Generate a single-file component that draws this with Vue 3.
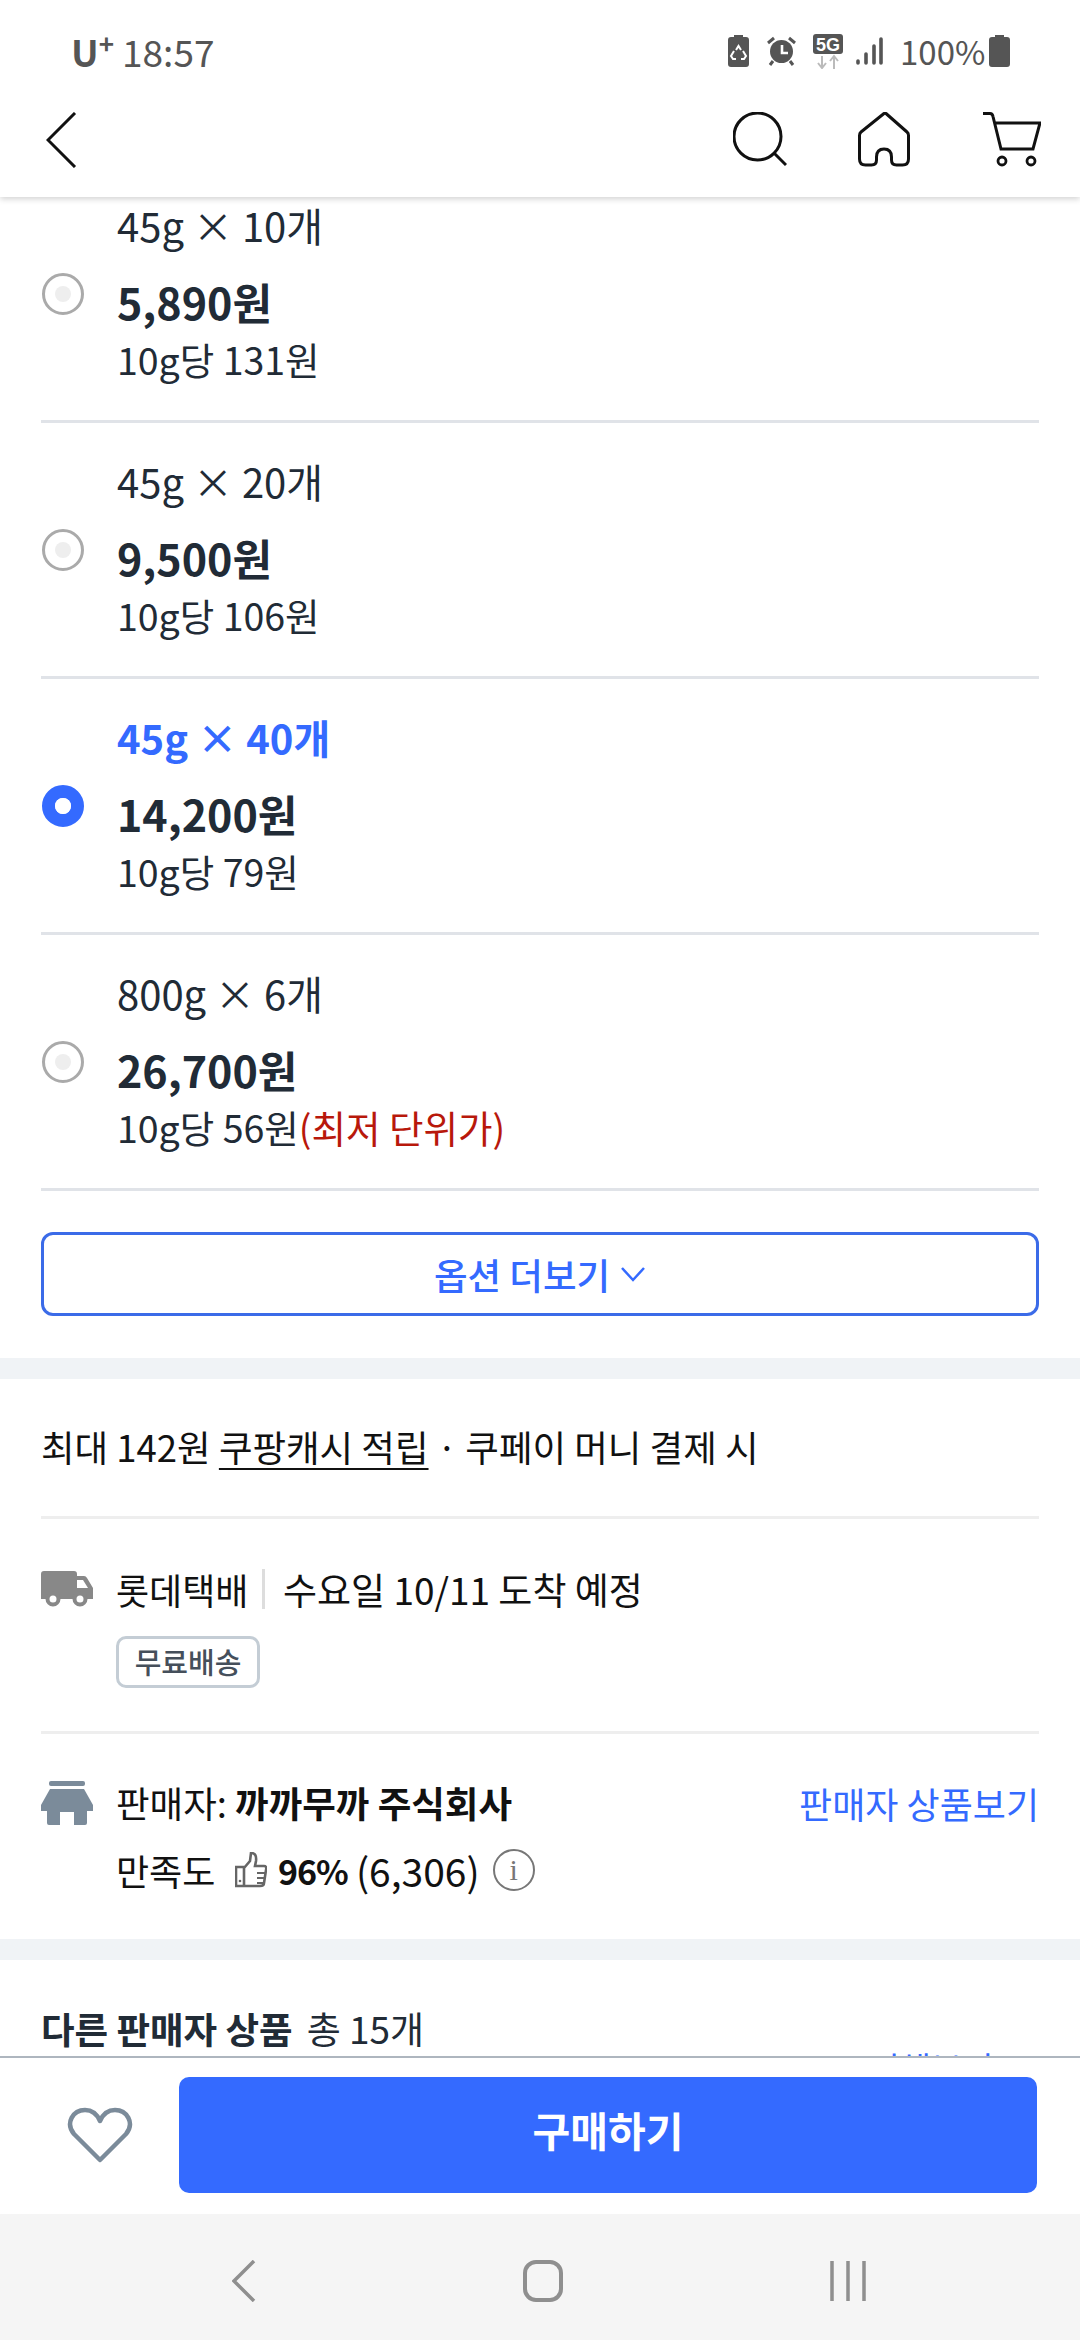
<script setup>
const options = [
  { title: '45g × 10개', price: '5,890원', unit: '10g당 131원' },
  { title: '45g × 20개', price: '9,500원', unit: '10g당 106원' },
  { title: '45g × 40개', price: '14,200원', unit: '10g당 79원', selected: true },
  { title: '800g × 6개', price: '26,700원', unit: '10g당 56원', note: '(최저 단위가)' }
]
</script>

<template>
  <div class="phone">
    <div class="top">
      <div class="status">
        <div class="status-left">
          <span class="carrier">U<sup>+</sup></span>
          <span class="clock">18:57</span>
        </div>
        <div class="status-right">
          <svg width="21" height="32" viewBox="0 0 21 32">
            <path d="M6 0h9v2h3a3 3 0 0 1 3 3v24a3 3 0 0 1-3 3H3a3 3 0 0 1-3-3V5a3 3 0 0 1 3-3h3z" fill="#555" />
            <path d="M8 15l2.5-4 2.5 4M15 16l3 5-2 3h-3M6 16l-3 5 2 3h3" stroke="#fff" stroke-width="2" fill="none" />
          </svg>
          <svg class="st-alarm" width="29" height="30" viewBox="0 0 29 30">
            <circle cx="14.5" cy="15.5" r="11.5" fill="#555" />
            <path d="M15 9v8h6" stroke="#fff" stroke-width="2.6" fill="none" />
            <path d="M1 7l6-5M28 7l-6-5M6 25l-3 4M23 25l3 4" stroke="#555" stroke-width="3" />
          </svg>
          <svg class="st-5g" width="30" height="35" viewBox="0 0 30 35">
            <rect width="30" height="20" rx="3" fill="#555" />
            <text x="15" y="16.5" text-anchor="middle" class="five-g">5G</text>
            <path d="M9 22v12M5 29l4 5 4-5M21 35V22M17 27l4-5 4 5" stroke="#bbb" stroke-width="2" fill="none" />
          </svg>
          <svg class="st-signal" width="27" height="28" viewBox="0 0 27 28">
            <path d="M2 24v2M10 17v9M18 9v17M25 2v24" stroke="#555" stroke-width="3.6" stroke-linecap="round" />
          </svg>
          <span class="pct">100%</span>
          <svg class="st-full" width="21" height="32" viewBox="0 0 21 32">
            <path d="M6 0h9v2h3a3 3 0 0 1 3 3v24a3 3 0 0 1-3 3H3a3 3 0 0 1-3-3V5a3 3 0 0 1 3-3h3z" fill="#555" />
          </svg>
        </div>
      </div>
      <div class="bar">
        <svg width="32" height="56" viewBox="0 0 32 56">
          <path d="M29 1L2 28l27 27" stroke="#111" stroke-width="3" fill="none" />
        </svg>
        <div class="bar-icons">
          <svg width="54" height="56" viewBox="0 0 54 56">
            <circle cx="24.5" cy="24.5" r="23.5" stroke="#111" stroke-width="3" fill="none" />
            <path d="M41 41l12 12" stroke="#111" stroke-width="3" />
          </svg>
          <svg width="54" height="56" viewBox="0 0 54 56">
            <path d="M26 1.5L3 20q-1.500 1.200-1.500 3.500V47q0 6 6 6h6q5 0 5-5v-3q0-8 7.500-8t7.500 8v3q0 5 5 5h6q6 0 6-6V23.500q0-2.300-1.500-3.500L28 1.500q-1-.8-2 0z" stroke="#111" stroke-width="3" fill="none" stroke-linejoin="round" />
          </svg>
          <svg width="58" height="56" viewBox="0 0 58 56">
            <path d="M0 1.500h7q2.500 0 3 3L18 37h32l7-26H12" stroke="#111" stroke-width="3" fill="none" />
            <circle cx="19" cy="49" r="4" stroke="#111" stroke-width="2.8" fill="none" />
            <circle cx="48" cy="49" r="4" stroke="#111" stroke-width="2.8" fill="none" />
          </svg>
        </div>
      </div>
    </div>

    <div class="scroll">
      <div class="options">
        <div v-for="opt in options" :key="opt.title" class="option">
          <span class="radio" :class="{ on: opt.selected }"></span>
          <div class="texts">
            <div class="opt-title" :class="{ on: opt.selected }">{{ opt.title }}</div>
            <div class="opt-price">{{ opt.price }}</div>
            <div class="opt-unit">{{ opt.unit }}<span v-if="opt.note" class="note">{{ opt.note }}</span></div>
          </div>
        </div>
      </div>

      <div class="more">
        <span>옵션 더보기</span>
        <svg width="26" height="16" viewBox="0 0 26 16">
          <path d="M2 2l11 12L24 2" stroke="#346aff" stroke-width="2.5" fill="none" />
        </svg>
      </div>

      <div class="band"></div>

      <div class="cash"><span>최대 142원 <u>쿠팡캐시 적립</u> · 쿠페이 머니 결제 시</span></div>

      <div class="delivery">
        <div class="del-line">
          <svg class="truck" width="52" height="36" viewBox="0 0 52 36">
            <path d="M3 0h30a3 3 0 0 1 3 3v25H0V3a3 3 0 0 1 3-3zM36 5h7q2 0 3 2l6 10v11H36z" fill="#888" />
            <path d="M36 9h6l5 8H36z" fill="#fff" />
            <circle cx="12" cy="28" r="5.500" fill="#fff" stroke="#888" stroke-width="4" />
            <circle cx="39" cy="28" r="5.500" fill="#fff" stroke="#888" stroke-width="4" />
          </svg>
          <span class="carrier-name">롯데택배</span>
          <span class="del-sep"></span>
          <span class="del-date">수요일 10/11 도착 예정</span>
        </div>
        <span class="free">무료배송</span>
      </div>

      <div class="seller">
        <div class="seller-line">
          <svg class="shop" width="52" height="44" viewBox="0 0 52 44">
            <rect x="8" y="0" width="36" height="5" rx="2" fill="#7b8b9a" />
            <path d="M9 8h34l9 16v6h-6v12q0 2-2 2H33V31H19v13H8q-2 0-2-2V30H0v-6z" fill="#7b8b9a" />
          </svg>
          <span class="seller-name">판매자: <b>까까무까 주식회사</b></span>
          <span class="seller-link">판매자 상품보기</span>
        </div>
        <div class="rating">
          <span class="rate-label">만족도</span>
          <svg class="thumb" width="32" height="36" viewBox="0 0 32 36">
            <path d="M1 15h8v19H1zM9 16l6-7 1-8q6 0 5 8l-1 5h9q3 0 2 4l-2 13q0 3-4 3H9" stroke="#666" stroke-width="2.6" fill="none" />
            <path d="M22 21h8M22 26h7M22 31h6" stroke="#666" stroke-width="2.2" />
            <circle cx="5" cy="29" r="1.300" fill="#666" />
          </svg>
          <b class="rate-num">96%</b>
          <span class="rate-count">(6,306)</span>
          <span class="info">i</span>
        </div>
      </div>

      <div class="band"></div>

      <div class="others">
        <b>다른 판매자 상품</b><span class="others-count">총 15개</span>
      </div>
      <div class="others-link">전체보기 &gt;</div>
    </div>

    <div class="footer">
      <svg width="66" height="56" viewBox="0 0 66 56">
        <path d="M33 53L7 27C-2 16 6 3 18 3c7 0 12 4 15 11C36 7 41 3 48 3c12 0 20 13 11 24z" stroke="#7b8b9a" stroke-width="4.500" fill="none" stroke-linejoin="round" />
      </svg>
      <button class="buy">구매하기</button>
    </div>

    <div class="nav">
      <svg width="24" height="42" viewBox="0 0 24 42">
        <path d="M22 1L2 21l20 20" stroke="#8f8f8f" stroke-width="3.500" fill="none" />
      </svg>
      <svg width="40" height="42" viewBox="0 0 40 42">
        <rect x="2" y="2" width="36" height="38" rx="11" stroke="#8f8f8f" stroke-width="4" fill="none" />
      </svg>
      <svg width="36" height="42" viewBox="0 0 36 42">
        <path d="M2 1v40M18 1v40M34 1v40" stroke="#8f8f8f" stroke-width="3.500" />
      </svg>
    </div>
  </div>
</template>

<style>
html, body {
  margin: 0;
  background: #fff;
}
</style>

<style scoped>
.phone {
  width: 1080px;
  height: 2340px;
  display: flex;
  flex-direction: column;
  overflow: hidden;
  background: #fff;
  color: #111;
  font-family: "Noto Sans CJK KR", "Noto Sans", sans-serif;
}

.top {
  height: 197px;
  flex: none;
  position: relative;
  z-index: 2;
  background: #fff;
  box-shadow: 0 2px 6px rgba(0, 0, 0, .18);
  box-sizing: border-box;
  padding: 0 39px 0 46px;
}

.status {
  height: 112px;
  margin-right: -10px;
  display: flex;
  justify-content: space-between;
  align-items: flex-start;
  padding: 33px 41px 0 25px;
  box-sizing: border-box;
  color: #555;
}

.status-left {
  display: flex;
  align-items: center;
  gap: 8px;
  height: 36px;
  font-size: 37px;
}

.carrier {
  font-weight: 700;
}

.carrier sup {
  font-size: 26px;
  line-height: 0;
}

.status-right {
  display: flex;
  align-items: center;
  height: 36px;
}

.st-alarm {
  margin-left: 18px;
}

.st-5g {
  margin-left: 17px;
}

.st-signal {
  margin-left: 13px;
}

.pct {
  margin-left: 17px;
  font-size: 33px;
  width: 89px;
}

.five-g {
  font-family: "Liberation Sans", sans-serif;
  font-size: 18px;
  font-weight: 700;
  fill: #fff;
}

.bar {
  display: flex;
  justify-content: space-between;
  align-items: center;
  height: 56px;
}

.bar-icons {
  display: flex;
  gap: 71px;
}

.scroll {
  flex: 1;
  min-height: 0;
  overflow: hidden;
}

/* list is scrolled a little under the header */
.options {
  margin: -30px 41px 0;
}

.option {
  height: 256px;
  box-sizing: border-box;
  border-bottom: 3px solid #e0e3e8;
  display: flex;
  align-items: center;
  gap: 33px;
}

.texts {
  padding-bottom: 6px;
}

.radio {
  width: 42px;
  height: 42px;
  margin-left: 1px;
  box-sizing: border-box;
  border-radius: 50%;
  border: 3px solid #aaa;
  background: #fff;
  display: grid;
  place-items: center;
  flex: none;
}

.radio::after {
  content: "";
  width: 16px;
  height: 16px;
  border-radius: 50%;
  background: #eee;
}

.radio.on {
  border: 13px solid #346aff;
}

.radio.on::after {
  background: #fff;
}

.opt-title {
  font-size: 40px;
  line-height: 56px;
  color: #212b36;
}

.opt-title.on {
  color: #346aff;
  font-weight: 700;
}

.opt-price {
  margin-top: 20px;
  font-size: 43px;
  line-height: 56px;
  font-weight: 700;
  color: #212b36;
}

.opt-unit {
  margin-top: 5px;
  font-size: 37.500px;
  line-height: 50px;
  color: #212b36;
}

.note {
  color: #b8180b;
}

.more {
  margin: 41px 41px 42px;
  height: 84px;
  box-sizing: border-box;
  border: 3px solid #3b6be8;
  border-radius: 12px;
  display: flex;
  justify-content: center;
  align-items: center;
  gap: 10px;
  color: #346aff;
  font-size: 36.500px;
  font-weight: 500;
}

.band {
  height: 21px;
  background: #f0f3f6;
}

.cash {
  margin: 0 41px;
  height: 140px;
  box-sizing: border-box;
  border-bottom: 3px solid #eee;
  display: flex;
  align-items: center;
  font-size: 36.500px;
  padding-bottom: 2px;
}

.cash u {
  text-underline-offset: 6px;
  text-decoration-thickness: 2px;
}

.delivery {
  margin: 0 41px;
  height: 215px;
  box-sizing: border-box;
  border-bottom: 3px solid #eee;
  padding-top: 50px;
}

.del-line {
  display: flex;
  align-items: center;
  height: 40px;
  font-size: 36px;
  line-height: 36px;
}

.truck {
  margin-right: 23px;
  flex: none;
}

.carrier-name {
  width: 146px;
}

.del-date {
  font-size: 37px;
}

.del-sep {
  width: 3px;
  height: 40px;
  background: #ddd;
  margin-right: 18px;
}

.free {
  display: inline-block;
  margin: 27px 0 0 75px;
  width: 144px;
  height: 52px;
  box-sizing: border-box;
  border: 3px solid #c4cdd5;
  border-radius: 10px;
  font-size: 29px;
  font-weight: 500;
  line-height: 44px;
  text-align: center;
  color: #454f5b;
}

.seller {
  margin: 0 41px;
  height: 205px;
  box-sizing: border-box;
  padding-top: 47px;
}

.seller-line {
  display: flex;
  align-items: center;
  height: 44px;
  font-size: 36.500px;
  line-height: 40px;
}

.shop {
  margin-right: 23px;
  flex: none;
}

.seller-name b {
  font-weight: 700;
}

.seller-link {
  margin-left: auto;
  color: #346aff;
  font-size: 36px;
}

.rating {
  display: flex;
  align-items: center;
  height: 44px;
  margin: 23px 0 0 75px;
  font-size: 36px;
}

.rate-label {
  width: 119px;
}

.thumb {
  flex: none;
}

.rate-num {
  margin-left: 11px;
  font-size: 34px;
  letter-spacing: -1px;
  font-weight: 700;
}

.rate-count {
  margin-left: 8px;
  font-size: 39px;
}

.info {
  margin-left: 13px;
  width: 42px;
  height: 42px;
  box-sizing: border-box;
  border: 2px solid #777;
  border-radius: 50%;
  display: grid;
  place-items: center;
  font-family: "Liberation Serif", serif;
  font-size: 30px;
  color: #777;
}

.others {
  margin: 0 41px;
  padding-top: 46px;
  height: 44px;
  line-height: 44px;
  font-size: 36.500px;
  color: #212b36;
}

.others b {
  font-weight: 700;
}

.others-count {
  margin-left: 14px;
  font-size: 37px;
}

.others-link {
  margin: -4px 60px 0 0;
  text-align: right;
  font-size: 34px;
  line-height: 44px;
  color: #346aff;
}

.footer {
  height: 158px;
  flex: none;
  position: relative;
  z-index: 2;
  box-sizing: border-box;
  border-top: 2px solid #aeb6bf;
  background: #fff;
  padding: 19px 43px 21px 67px;
  display: flex;
  align-items: center;
  justify-content: space-between;
}

.buy {
  width: 858px;
  height: 116px;
  border: 0;
  border-radius: 10px;
  background: #346aff;
  color: #fff;
  font-family: inherit;
  font-size: 41px;
  font-weight: 700;
  padding: 0 0 12px;
}

.nav {
  height: 126px;
  flex: none;
  box-sizing: border-box;
  background: #f5f5f5;
  position: relative;
  z-index: 2;
  padding: 46px 214px 0 232px;
  display: flex;
  justify-content: space-between;
  align-items: flex-start;
}
</style>
